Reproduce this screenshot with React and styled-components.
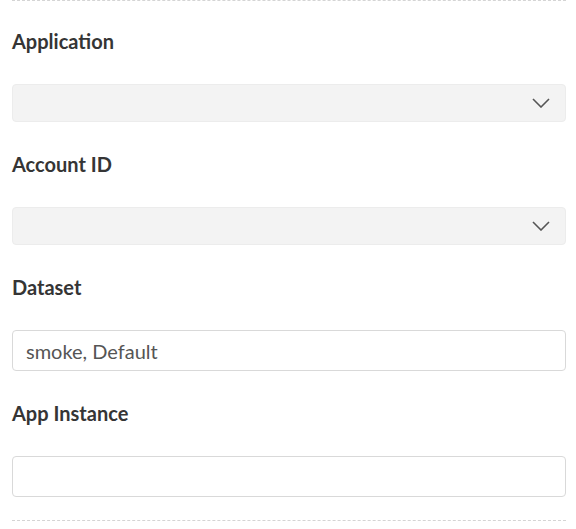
import styled, { createGlobalStyle } from 'styled-components';

const GlobalStyle = createGlobalStyle`
	body {
		margin: 0;
		background: #fff;
		font-family: Lato, "Noto Sans", sans-serif;
	}
`;

const Form = styled.div`
	margin: 0 10px 0 12px;
	padding: 28px 0 23px;
	border-top: 1px dashed #d4d4d4;
	border-bottom: 1px dashed #d4d4d4;
	display: flex;
	flex-direction: column;
	gap: 30px;
`;

const Field = styled.div`
	display: flex;
	flex-direction: column;
	gap: 31px;
`;

const Label = styled.label`
	font-size: 20px;
	line-height: 24px;
	font-weight: 700;
	color: #353535;
`;

const SelectBox = styled.div`
	position: relative;
	height: 38px;
	box-sizing: border-box;
	background: #f3f3f3;
	border: 1px solid #ececec;
	border-radius: 4px;
`;

const Chevron = styled.svg`
	position: absolute;
	right: 15px;
	top: 50%;
	transform: translateY(-50%);
`;

const TextInput = styled.div`
	height: 41px;
	box-sizing: border-box;
	border: 1px solid #d9d9d9;
	border-radius: 4px;
	padding: 0 13px;
	display: flex;
	align-items: center;
	font-size: 20px;
	color: #555;
`;

const Select = () => (
	<SelectBox>
		<Chevron width="18" height="10" viewBox="0 0 18 10" fill="none">
			<path d="M1 1l8 8 8-8" stroke="#555" strokeWidth="1.6" />
		</Chevron>
	</SelectBox>
);

export default function App() {
	return (
		<>
			<GlobalStyle />
			<Form>
				<Field>
					<Label>Application</Label>
					<Select />
				</Field>
				<Field>
					<Label>Account ID</Label>
					<Select />
				</Field>
				<Field>
					<Label>Dataset</Label>
					<TextInput>smoke, Default</TextInput>
				</Field>
				<Field>
					<Label>App Instance</Label>
					<TextInput />
				</Field>
			</Form>
		</>
	);
}
